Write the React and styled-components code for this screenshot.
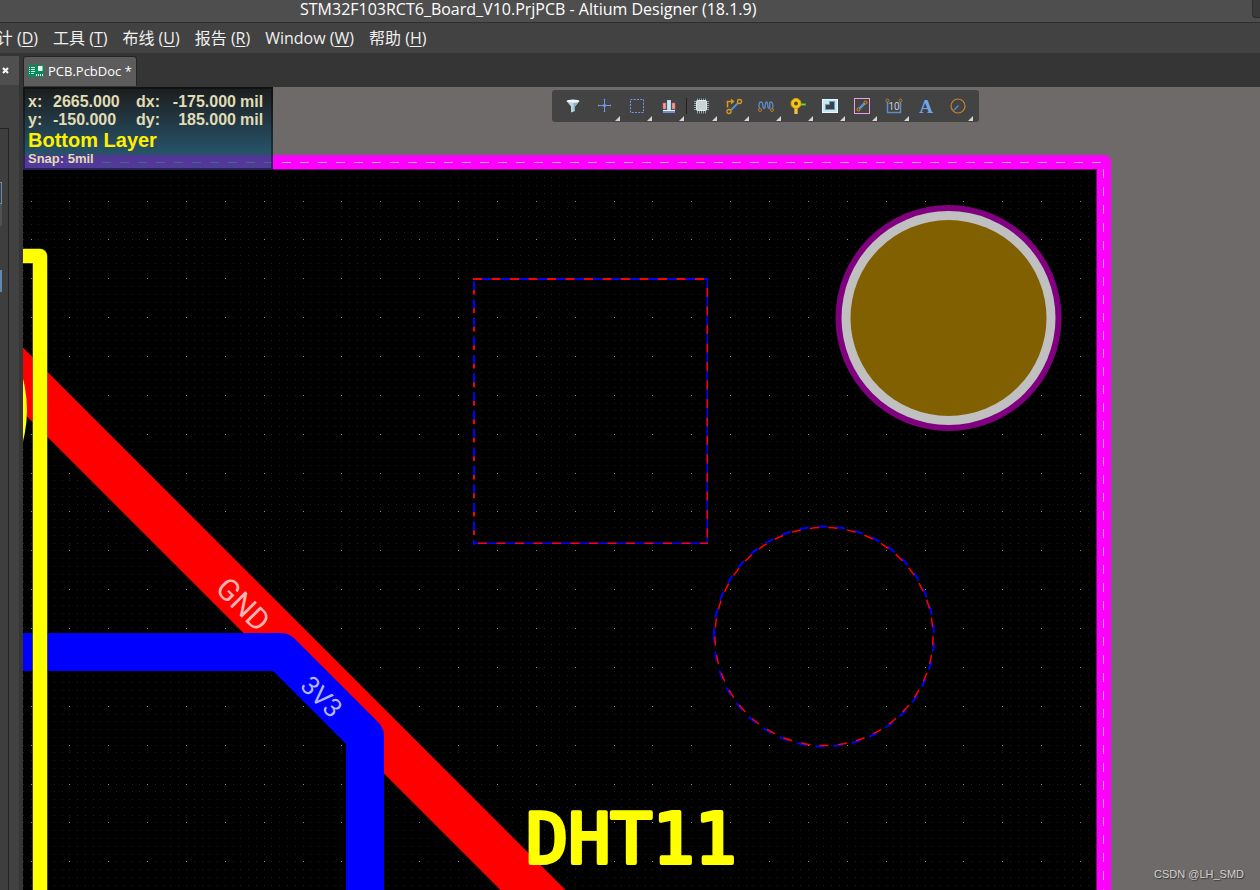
import React from "react";
import styled, { createGlobalStyle } from "styled-components";

const BLUE = "#7396e6";
const WIRE = "#5f8cc4";
const ORANGE = "#d99a1c";
const COPPER = "#b8802a";
const PANEL = "#434343";

const MENUS = [
  { label: "计", hotkey: "D", cut: true },
  { label: "工具", hotkey: "T" },
  { label: "布线", hotkey: "U" },
  { label: "报告", hotkey: "R" },
  { label: "Window", hotkey: "W" },
  { label: "帮助", hotkey: "H" },
];

// toolbar icons, each on a 20 x 20 field
const ICONS = {
  filter: (
    <>
      <path d="M3.5 5 8 10.500v6l4-1.500v-4.500L16.500 5z" fill="#b9d5e0" />
      <path d="M10.500 7v8.500l1.500-.5v-4.500l3-3.500z" fill="#8fb3c4" />
      <ellipse cx="10" cy="5" rx="6.500" ry="1.500" fill="#eef8fb" />
    </>
  ),
  cross: (
    <>
      <path d="M9.500 3v13M3 9.500h13" stroke={BLUE} />
      <path d="M8.500 8v3M10.500 8v3" stroke={BLUE} strokeOpacity="0.6" />
      <path d="M3.500 8.500v2M15.500 8.500v2M8.500 3.500h2M8.500 15.500h2" stroke={BLUE} strokeOpacity="0.6" />
    </>
  ),
  select: <rect x="3.500" y="3.500" width="13" height="13" fill="none" stroke={BLUE} strokeDasharray="2 1.250" />,
  align: (
    <>
      <rect x="4" y="7" width="3" height="6" fill="#f0a0a0" stroke="#c95a60" strokeWidth="0.600" />
      <rect x="13" y="7" width="3" height="6" fill="#f0a0a0" stroke="#c95a60" strokeWidth="0.600" />
      <rect x="8" y="4" width="4" height="10" fill="#a8dcf0" />
      <path d="M10 5v8" stroke="#e6f8ff" />
      <rect x="4" y="14" width="12" height="1" fill="#e8f0fa" />
      <rect x="4" y="15" width="12" height="2" fill="#6d8fd0" />
    </>
  ),
  chip: (
    <>
      <path
        d="M5.500 2.500v15M7.500 2.500v15M9.500 2.500v15M11.500 2.500v15M13.500 2.500v15M2 5.500h15M2 7.500h15M2 9.500h15M2 11.500h15M2 13.500h15"
        stroke="#86a2b0"
      />
      <rect x="4.500" y="4.500" width="10" height="10" rx="1" fill="#ccd2d5" stroke="#dde8ec" />
    </>
  ),
  route: (
    <>
      <path d="M3.500 11.500v-6H8" fill="none" stroke={ORANGE} strokeWidth="1.500" />
      <path d="M7 2.500 10.500 5.500 7 8.500z" fill={ORANGE} />
      <path d="M14 7 7 14" stroke={WIRE} strokeWidth="2" />
      <circle cx="15.500" cy="5.500" r="2" fill="none" stroke={ORANGE} strokeWidth="1.300" />
      <circle cx="5" cy="15.500" r="2" fill="none" stroke={ORANGE} strokeWidth="1.300" />
    </>
  ),
  wave: (
    <>
      <path
        d="M3.500 12.500C2.500 9 3 6 5 6 8 6 6 12.500 8 12.500S8.500 6 10.500 6 11 12.500 13 12.500 12.500 6 14.500 6C16.500 6 17.500 9 16.500 12.500"
        fill="none"
        stroke={WIRE}
        strokeWidth="1.300"
      />
      <circle cx="4" cy="14" r="1.500" fill={PANEL} stroke={COPPER} />
      <circle cx="16" cy="14" r="1.500" fill={PANEL} stroke={COPPER} />
    </>
  ),
  via: (
    <>
      <path d="M12 8.500h6" stroke="#3f8f2a" strokeWidth="3" />
      <path d="M12 8.500h5.500" stroke="#7cc957" />
      <path d="M8 11v7" stroke="#e8a53a" strokeWidth="3.500" />
      <path d="M8 12v6" stroke="#f7d38a" />
      <circle cx="8" cy="7.500" r="5" fill="#f5c816" stroke="#dba300" />
      <circle cx="8" cy="7.500" r="2" fill="#5c4a1c" />
    </>
  ),
  polygon: (
    <>
      <rect x="2.500" y="3.500" width="15" height="13" fill="#c6e6f3" stroke="#e6f7fd" />
      <path d="M5.500 13.500v-5h4v-3h5v8z" fill="#3d4145" stroke="#6d9bb5" />
    </>
  ),
  track: (
    <>
      <rect x="2.500" y="2.500" width="15" height="15" fill="none" stroke="#ee9be0" />
      <path d="M7.500 12.500 12.500 7.500" stroke={WIRE} strokeWidth="2.500" />
      <circle cx="13.500" cy="6.500" r="1.500" fill="none" stroke={ORANGE} />
      <circle cx="6.500" cy="13.500" r="1.500" fill="none" stroke={ORANGE} />
    </>
  ),
  dimension: (
    <>
      <path d="M3.500 6v10.500h13V6" fill="none" stroke={WIRE} strokeWidth="1.500" />
      <circle cx="3.500" cy="4.500" r="1.500" fill={PANEL} stroke={COPPER} />
      <circle cx="16.500" cy="4.500" r="1.500" fill={PANEL} stroke={COPPER} />
      <text x="10" y="14" fontSize="10" fill="#c6cbd0" textAnchor="middle" fontFamily="Roboto, sans-serif">
        10
      </text>
    </>
  ),
  text: (
    <text x="10" y="17" fontSize="19" fontWeight="bold" fill="#6ea8ec" textAnchor="middle" fontFamily="'Liberation Serif', serif">
      A
    </text>
  ),
  arc: (
    <>
      <circle cx="10" cy="10" r="7" fill="none" stroke="#c9822e" strokeWidth="1.200" />
      <path d="M10.500 9.500 6 14" stroke={WIRE} strokeWidth="1.300" />
    </>
  ),
};

const TOOLS = [
  { icon: "filter", title: "Selection Filter" },
  { icon: "cross", title: "Snapping", more: true },
  { icon: "select", title: "Select Area", more: true },
  { icon: "align", title: "Align", more: true },
  { icon: "chip", title: "Place Component", more: true, divided: true },
  { icon: "route", title: "Route", more: true },
  { icon: "wave", title: "Tune Length", more: true },
  { icon: "via", title: "Place Via", more: true },
  { icon: "polygon", title: "Place Polygon", more: true },
  { icon: "track", title: "Place Line", more: true },
  { icon: "dimension", title: "Place Dimension", more: true },
  { icon: "text", title: "Place String" },
  { icon: "arc", title: "Place Arc", more: true },
];

// one path of single-pixel dots, either the coarse grid or the fine one
const gridDots = (coarse) => {
  const pitch = 38.87;
  let d = "";
  for (let i = -1; i <= 137; i += 1) {
    for (let j = -4; j <= 140; j += 1) {
      const onCoarse = i % 5 === 0 && j % 5 === 0;
      if (onCoarse === coarse) {
        d += `M${Math.floor(31 + (i * pitch) / 5)} ${Math.floor(201 + (j * pitch) / 5)}h1v1h-1z`;
      }
    }
  }
  return d;
};

const FINE_DOTS = gridDots(false);
const COARSE_DOTS = gridDots(true);

const Board = () => (
  <Canvas role="img" aria-label="PCB layout">
    <g transform="translate(-23 -87)">
      <path d="M0 162H1104V2000H0z" fill="#000" />
      <path d={FINE_DOTS} fill="#1e1e1e" shapeRendering="crispEdges" />
      <path d={COARSE_DOTS} fill="#8c8c8c" shapeRendering="crispEdges" />

      {/* board outline */}
      <path d="M0 169.500H1096.500V2000" fill="none" stroke="#800080" />
      <path d="M0 162H1104V2000" fill="none" stroke="#f0f" strokeWidth="14" strokeLinejoin="round" />
      <path d="M12 162.500H1104" stroke="#c6a9c6" strokeDasharray="9 9" />
      <path d="M1103.500 169V2000" stroke="#c6a9c6" strokeDasharray="9 9" />

      {/* mounting hole */}
      <circle cx="948.500" cy="318" r="113" fill="#800080" />
      <circle cx="948.500" cy="318" r="107" fill="#c0c0c0" />
      <circle cx="948.500" cy="318" r="98" fill="#806000" />

      {/* tracks */}
      <path d="M-20 337 620 977" stroke="#f00" strokeWidth="46" />
      <path d="M0 652H281L365 736V2000" fill="none" stroke="#00f" strokeWidth="38" strokeLinejoin="round" />
      <NetName x="0" y="0" fill="#ffb4b4" fontSize="30" transform="translate(214 590) rotate(45)">
        GND
      </NetName>
      <NetName x="0" y="0" fill="#b4b4ff" fontSize="26" transform="translate(299 687) rotate(45)">
        3V3
      </NetName>

      {/* keep-out shapes */}
      <g fill="none" strokeWidth="1.500">
        <path d="M473 279H708" stroke="#00f" strokeWidth="2" strokeDasharray="9.500 9" strokeDashoffset="-9" />
        <path d="M473 279H708" stroke="#f00" strokeWidth="2" strokeDasharray="9 9.500" />
        <path d="M474 281V545" stroke="#00f" strokeWidth="2" strokeDasharray="10 8.500" />
        <path d="M474 290V544" stroke="#f00" strokeWidth="2" strokeDasharray="4.500 14" />
        <path d="M707.250 279V544" stroke="#00f" />
        <path d="M707.250 288V544" stroke="#f00" strokeDasharray="9 9.500" />
        <path d="M474 543.250H708" stroke="#00f" />
        <path d="M478 543.250H708" stroke="#f00" strokeDasharray="9 9.500" />
        <circle
          cx="824"
          cy="636.500"
          r="110"
          stroke="#00f"
          strokeWidth="2"
          strokeDasharray="9.240 9.240"
          transform="rotate(180 824 636.5)"
        />
        <circle cx="824" cy="636.500" r="109" stroke="#f00" strokeDasharray="9.240 9.240" />
      </g>

      {/* silkscreen */}
      <ellipse cx="-93" cy="410" rx="120" ry="122" fill="#ff0" />
      <path d="M0 256H40V2000" fill="none" stroke="#808000" strokeWidth="15" strokeLinejoin="round" />
      <path d="M0 256H40V2000" fill="none" stroke="#ff0" strokeWidth="14" strokeLinejoin="round" />
      <Designator x="526" y="863">
        DHT11
      </Designator>
    </g>
  </Canvas>
);

const HeadsUp = () => (
  <HudBox>
    <Coords>
      <span>x:</span>
      <span>2665.000</span>
      <span>dx:</span>
      <Delta>-175.000</Delta>
      <span>mil</span>
      <span>y:</span>
      <span>-150.000</span>
      <span>dy:</span>
      <Delta>185.000</Delta>
      <span>mil</span>
    </Coords>
    <LayerName>Bottom Layer</LayerName>
    <Snap>Snap: 5mil</Snap>
  </HudBox>
);

const App = () => {
  return (
    <Page>
      <GlobalStyle />
      <TitleBar>
        <span>STM32F103RCT6_Board_V10.PrjPCB - Altium Designer (18.1.9)</span>
        <SearchEdge />
      </TitleBar>
      <MenuBar>
        {MENUS.map((m) => (
          <MenuButton key={m.hotkey} type="button" $cut={m.cut}>
            {m.label} (<u>{m.hotkey}</u>)
          </MenuButton>
        ))}
      </MenuBar>
      <Body>
        <Side>
          <SideHead>
            <CloseButton type="button" aria-label="Close panel">
              <svg width="7" height="7" viewBox="0 0 7 7">
                <path d="M1 1 6 6M6 1 1 6" stroke="#fff" strokeWidth="2" />
              </svg>
            </CloseButton>
          </SideHead>
          <SideList>
            <SideField />
            <SideStrip />
            <SideRow />
          </SideList>
        </Side>
        <Main>
          <Tabs role="tablist">
            <Tab type="button" role="tab" aria-selected="true">
              <svg width="16" height="12" viewBox="0 0 16 12" aria-hidden="true">
                <rect width="16" height="12" fill="#0a8a5c" />
                <path d="M1 2.500h1M1 4.500h1M1 6.500h1M1 8.500h1M3 2.500h4M3 4.500h4M3 6.500h4M3 8.500h3" stroke="#c9efdf" />
                <rect x="10" y="1" width="4.500" height="5" fill="#e6f7f0" />
                <path d="M8.500 9v2M10.500 9v2M12.500 9v2M14.500 9v2" stroke="#e6f7f0" />
              </svg>
              PCB.PcbDoc *
            </Tab>
          </Tabs>
          <Workspace>
            <Board />
            <HeadsUp />
            <Toolbar role="toolbar">
              {TOOLS.map((t) => (
                <ToolButton key={t.icon} type="button" aria-label={t.title} $divided={t.divided}>
                  <svg width="20" height="20" viewBox="0 0 20 20">
                    {ICONS[t.icon]}
                  </svg>
                  {t.more && <MoreMark />}
                </ToolButton>
              ))}
            </Toolbar>
            <Watermark>CSDN @LH_SMD</Watermark>
          </Workspace>
        </Main>
      </Body>
    </Page>
  );
};

const GlobalStyle = createGlobalStyle`
  * {
    box-sizing: border-box;
  }
  body {
    margin: 0;
    background: #353535;
    color: #f0f0f0;
    font-family: "Open Sans", "Noto Sans CJK SC", sans-serif;
  }
  button {
    margin: 0;
    padding: 0;
    border: 0;
    background: none;
    color: inherit;
    font: inherit;
  }
`;

const Page = styled.div`
  display: flex;
  flex-direction: column;
  min-height: 100vh;
`;

const TitleBar = styled.header`
  display: flex;
  justify-content: space-between;
  height: 23px;
  padding-left: 300px;
  border-bottom: 1px solid #2e2e2e;
  background: #4e4e4e;
  color: #fff;
  font-size: 16px;
  line-height: 18px;
  white-space: nowrap;
`;

const SearchEdge = styled.div`
  width: 8px;
  height: 18px;
  border: 1px solid #2c2c2c;
  border-width: 0 0 1px 1px;
  border-radius: 0 0 0 4px;
  background: #3a3a3a;
`;

const MenuBar = styled.nav`
  display: flex;
  gap: 15px;
  height: 30px;
  background: #424242;
  font-size: 16px;
  line-height: 30px;
  white-space: nowrap;
`;

const MenuButton = styled.button`
  display: ${(p) => (p.$cut ? "flex" : "block")};
  justify-content: flex-end;
  width: ${(p) => (p.$cut ? "38px" : "auto")};
  white-space: pre;

  u {
    text-underline-offset: 2px;
  }
`;

const Body = styled.div`
  display: flex;
  flex: 1;
  gap: 4px;
`;

const Side = styled.aside`
  display: flex;
  flex-direction: column;
  width: 19px;
  margin-top: 3px;
  background: #414141;
`;

const SideHead = styled.div`
  display: flex;
  height: 29px;
  margin-bottom: 43px;
  padding-left: 2px;
  background: #4f4f4f;
`;

const CloseButton = styled.button`
  display: flex;
  align-items: center;
`;

const SideList = styled.div`
  flex: 1;
  width: 9px;
  padding-top: 53px;
  border: 1px solid #242424;
  border-width: 1px 1px 0 0;
  background: #3e3e3e;
`;

const SideField = styled.div`
  width: 2px;
  height: 22px;
  border: 1px solid #6a8db0;
  border-left: 0;
`;

const SideStrip = styled.div`
  width: 2px;
  height: 22px;
  margin-bottom: 44px;
  background: #505050;
`;

const SideRow = styled.div`
  width: 2px;
  height: 22px;
  background: #6088ae;
`;

const Main = styled.main`
  display: flex;
  flex: 1;
  flex-direction: column;
  min-width: 0;
`;

const Tabs = styled.div`
  display: flex;
  align-items: flex-end;
  height: 34px;
  padding-bottom: 1px;
`;

const Tab = styled.button`
  display: flex;
  align-items: center;
  gap: 4px;
  height: 30px;
  padding: 0 4px 2px;
  border: 1px solid #242424;
  border-bottom: 0;
  border-radius: 3px 3px 0 0;
  background: #5c5c5c;
  color: #fff;
  font-size: 13px;
  white-space: nowrap;
`;

const Workspace = styled.div`
  position: relative;
  flex: 1;
  overflow: hidden;
  background: #6e6a69;
`;

const Canvas = styled.svg`
  position: absolute;
  inset: 0;
  width: 100%;
  height: 100%;
`;

const NetName = styled.text`
  font-family: Roboto, sans-serif;
  font-weight: 400;
`;

const Designator = styled.text`
  fill: #ff0;
  stroke: #ff0;
  stroke-width: 4px;
  stroke-linejoin: round;
  font-family: "DejaVu Sans Mono", monospace;
  font-size: 70px;
`;

const HudBox = styled.div`
  position: absolute;
  top: 0;
  left: 0;
  width: 250px;
  padding: 4px 4px 2px 3px;
  border: 2px solid rgba(0, 0, 0, 0.4);
  background: linear-gradient(rgba(24, 24, 24, 0.95), rgba(11, 70, 100, 0.72) 75%, rgba(11, 84, 114, 0.7)) border-box;
  color: #e0dcb4;
  font-family: "Liberation Sans", sans-serif;
  font-weight: bold;
  white-space: nowrap;
`;

const Coords = styled.div`
  display: grid;
  grid-template-columns: 25px 83px 35px 65px auto;
  font-size: 16px;
  line-height: 18px;

  span:nth-child(5n) {
    padding-left: 4px;
  }
`;

const Delta = styled.span`
  text-align: right;
`;

const LayerName = styled.div`
  color: #fff000;
  font-size: 20px;
  line-height: 23px;
`;

const Snap = styled.div`
  font-size: 13px;
  line-height: 14px;
`;

const Toolbar = styled.div`
  position: absolute;
  top: 3px;
  left: 529px;
  display: flex;
  padding: 0 5px;
  border-radius: 3px;
  background: ${PANEL};
`;

const ToolButton = styled.button`
  position: relative;
  display: flex;
  align-items: center;
  justify-content: center;
  width: 32px;
  height: 32px;
  margin-left: ${(p) => (p.$divided ? "1px" : "0")};

  &::before {
    content: "";
    display: ${(p) => (p.$divided ? "block" : "none")};
    position: absolute;
    top: 8px;
    left: 0;
    width: 1px;
    height: 16px;
    background: #222;
  }
`;

const MoreMark = styled.span`
  position: absolute;
  right: 1px;
  bottom: 1px;
  border-left: 5px solid transparent;
  border-bottom: 5px solid #d4d4d4;
`;

const Watermark = styled.div`
  position: absolute;
  right: 16px;
  bottom: 9px;
  color: #d0d0d0;
  font-family: "Liberation Sans", sans-serif;
  font-size: 11px;
  line-height: 14px;
  text-shadow: 1px 1px 1px #333;
`;

export default App;
